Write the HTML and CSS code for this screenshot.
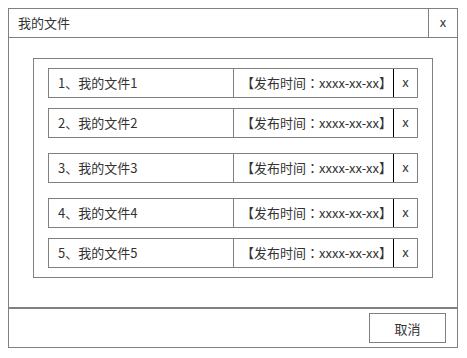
FILE: index.html
```html
<html>
<head>
  <meta name="viewport" content="width=device-width, initial-scale=1.0">
  <link rel="stylesheet" href="styles.css">
</head>
<body>

<div class="dialog">
  <div class="dialog-head">
    <span class="dialog-title">我的文件</span>
    <span class="dialog-close">x</span>
  </div>

  <div class="dialog-body">
    <div class="file-box">
      <div class="file-row">
        <span class="file-name">1、我的文件1</span>
        <span class="file-date">【发布时间：xxxx-xx-xx】</span>
        <span class="file-del">x</span>
      </div>
      <div class="file-row">
        <span class="file-name">2、我的文件2</span>
        <span class="file-date">【发布时间：xxxx-xx-xx】</span>
        <span class="file-del">x</span>
      </div>
      <div class="file-row wide">
        <span class="file-name">3、我的文件3</span>
        <span class="file-date">【发布时间：xxxx-xx-xx】</span>
        <span class="file-del">x</span>
      </div>
      <div class="file-row wide">
        <span class="file-name">4、我的文件4</span>
        <span class="file-date">【发布时间：xxxx-xx-xx】</span>
        <span class="file-del">x</span>
      </div>
      <div class="file-row">
        <span class="file-name">5、我的文件5</span>
        <span class="file-date">【发布时间：xxxx-xx-xx】</span>
        <span class="file-del">x</span>
      </div>
    </div>
  </div>

  <div class="dialog-foot">
    <button class="btn-cancel">取消</button>
  </div>
</div>

</body>
</html>
```

FILE: styles.css
```css
body {
  margin: 8px;
  background: #fff;
  font-family: "Noto Sans CJK SC", "Liberation Sans", sans-serif;
  font-size: 13px;
  color: #333;
}

.dialog {
  width: 450px;
  height: 340px;
  box-sizing: border-box;
  border: 1px solid #808080;
  display: flex;
  flex-direction: column;
}

.dialog-head {
  display: flex;
  height: 29px;
  box-sizing: border-box;
  border-bottom: 1px solid #808080;
}
.dialog-title {
  flex: 1;
  padding-left: 9px;
  line-height: 28px;
}
.dialog-close {
  width: 28px;
  border-left: 1px solid #808080;
  text-align: center;
  line-height: 26px;
}

.dialog-body {
  flex: 1;
  padding: 20px 24px 0 24px;
}

.file-box {
  border: 1px solid #808080;
  padding: 9px 14px;
}

.file-row {
  display: flex;
  height: 30px;
  box-sizing: border-box;
  border: 1px solid #808080;
  margin-top: 10px; /* 11 gap incl border */
  line-height: 27px;
}
.file-row:first-child {
  margin-top: 0;
}
.file-row.wide {
  margin-top: 15px;
}
.file-name {
  width: 185px;
  padding-left: 9px;
  box-sizing: border-box;
  border-right: 1px solid #808080;
}
.file-date {
  flex: 1;
  text-align: right;
  border-right: 1px solid #000;
  white-space: nowrap;
  font-family: "Noto Sans CJK TC", "Liberation Sans", sans-serif;
  padding-right: 1px;
}
.file-del {
  width: 23px;
  text-align: center;
  line-height: 26px;
}

.dialog-foot {
  display: flex;
  justify-content: flex-end;
  border-top: 2px solid #808080;
  padding: 4px 11px 4px 0;
}
.btn-cancel {
  width: 77px;
  height: 30px;
  background: #fff;
  border: 1px solid #808080;
  font-family: inherit;
  font-size: 13px;
  color: #333;
  padding: 0;
}
```
